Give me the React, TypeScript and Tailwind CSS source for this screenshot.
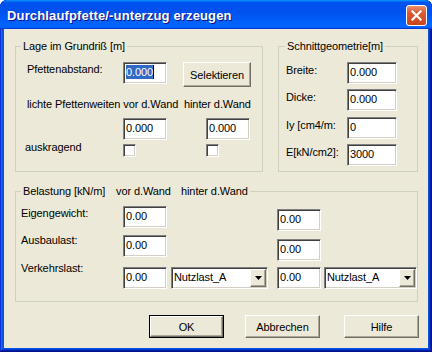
import React from "react";

const sunken =
  "bg-white border border-t-[#808080] border-l-[#808080] border-b-white border-r-white shadow-[inset_1px_1px_#404040,inset_-1px_-1px_#D4D0C8]";
const raised =
  "bg-[#ECE9D8] border border-t-white border-l-white border-b-[#716F64] border-r-[#716F64] shadow-[inset_-1px_-1px_#ACA899]";

function Edit({ className = "", children }: { className?: string; children?: React.ReactNode }) {
  return (
    <div className={`h-[22px] shrink-0 pl-[2px] pt-[2px] leading-[14px] whitespace-nowrap ${sunken} ${className}`}>
      {children}
    </div>
  );
}

function Check({ className = "" }: { className?: string }) {
  return <div className={`w-[13px] h-[13px] shrink-0 ${sunken} ${className}`} />;
}

function Combo({ className = "" }: { className?: string }) {
  return (
    <div className={`h-[22px] shrink-0 flex items-stretch p-[1px] ${sunken} ${className}`}>
      <span className="flex-1 pl-[1px] pt-[1px] leading-[14px]">Nutzlast_A</span>
      <div className={`w-[16px] flex items-center justify-center ${raised}`}>
        <svg width="7" height="4" viewBox="0 0 7 4">
          <polygon points="0,0 7,0 3.5,4" fill="black" />
        </svg>
      </div>
    </div>
  );
}

function Btn({ className = "", children }: { className?: string; children: React.ReactNode }) {
  return (
    <div className={`shrink-0 flex items-center justify-center ${raised} ${className}`}>{children}</div>
  );
}

export default function App() {
  return (
    <div className="w-[432px] h-[352px] flex flex-col bg-[#0855DD] rounded-t-[7px] overflow-hidden font-['Liberation_Sans',Arial,sans-serif] text-[11px] leading-[14px] text-black shadow-[inset_-1px_-1px_#00138c,inset_1px_1px_#0831d9,inset_-2px_-2px_#001ea0,inset_2px_2px_#166aee,inset_-3px_-3px_#003bda,inset_3px_3px_#0855dd]">
      {/* Title bar */}
      <div className="h-[29px] shrink-0 flex items-start pl-[7px] pr-[5px] rounded-t-[7px] bg-[linear-gradient(180deg,#0997ff,#0053ee_8%,#0050ee_40%,#0066ff_88%,#0066ff_93%,#005bff_95%,#003dd7_96%,#003dd7)]">
        <span className="mt-[8px] flex-1 text-white font-bold text-[13px] leading-[16px] tracking-[0.15px] [text-shadow:1px_1px_#0f1089]">
          Durchlaufpfette/-unterzug erzeugen
        </span>
        <div className="mt-[5px] w-[21px] h-[21px] rounded-[3px] border border-white bg-[linear-gradient(180deg,#E9906F,#DC5A33_35%,#C94420)] flex items-center justify-center">
          <svg width="11" height="11" viewBox="0 0 11 11">
            <path d="M1.5 1.5 L9.5 9.5 M9.5 1.5 L1.5 9.5" stroke="white" strokeWidth="2.2" strokeLinecap="square" />
          </svg>
        </div>
      </div>

      {/* Body */}
      <div className="flex-1 mx-[4px] mb-[4px] bg-[#ECE9D8] flex flex-col pl-[11px] tracking-[-0.1px]">
        <div className="flex gap-[15px] mt-[10px]">
          {/* Group 1 */}
          <fieldset className="w-[248px] h-[133px] border border-[#D0D0BF] p-0 m-0 min-w-0">
            <legend className="ml-[5px] px-[2px] leading-[14px]">Lage im Grundriß [m]</legend>
            <div className="flex items-start mt-[9px] pl-[11px]">
              <span className="w-[96px] shrink-0">Pfettenabstand:</span>
              <Edit className="w-[44px] flex items-start">
                <span className="bg-[#316AC5] text-white">0.000</span>
                <span className="w-[1px] h-[14px] bg-black" />
              </Edit>
              <Btn className="ml-[16px] w-[68px] h-[25px]">Selektieren</Btn>
            </div>
            <div className="flex items-start mt-[10px] pl-[11px] whitespace-nowrap">
              <span className="w-[157px] shrink-0">lichte Pfettenweiten vor d.Wand</span>
              <span>hinter d.Wand</span>
            </div>
            <div className="flex items-start mt-[7px] pl-[107px]">
              <Edit className="w-[44px]">0.000</Edit>
              <Edit className="w-[44px] ml-[39px]">0.000</Edit>
            </div>
            <div className="flex items-start mt-[1px] pl-[9px]">
              <span className="w-[98px] shrink-0 leading-[13px]">auskragend</span>
              <Check className="mt-[3px]" />
              <Check className="mt-[3px] ml-[70px]" />
            </div>
          </fieldset>

          {/* Group 2 */}
          <fieldset className="w-[140px] h-[133px] border border-[#D0D0BF] p-0 m-0 min-w-0">
            <legend className="ml-[6px] px-[2px] leading-[14px]">Schnittgeometrie[m]</legend>
            <div className="flex items-start mt-[9px] pl-[7px]">
              <span className="w-[61px] shrink-0 mt-[1px]">Breite:</span>
              <Edit className="w-[50px]">0.000</Edit>
            </div>
            <div className="flex items-start mt-[5px] pl-[7px]">
              <span className="w-[61px] shrink-0 mt-[1px]">Dicke:</span>
              <Edit className="w-[50px]">0.000</Edit>
            </div>
            <div className="flex items-start mt-[6px] pl-[7px]">
              <span className="w-[61px] shrink-0 mt-[1px] whitespace-nowrap">Iy [cm4/m:</span>
              <Edit className="w-[50px]">0</Edit>
            </div>
            <div className="flex items-start mt-[5px] pl-[7px]">
              <span className="w-[61px] shrink-0 mt-[1px] whitespace-nowrap">E[kN/cm2]:</span>
              <Edit className="w-[50px]">3000</Edit>
            </div>
          </fieldset>
        </div>

        {/* Group 3 */}
        <fieldset className="w-[403px] h-[118px] mt-[12px] border border-[#D0D0BF] p-0 m-0 min-w-0">
          <legend className="ml-[5px] px-[2px] leading-[14px] whitespace-nowrap">
            <span className="inline-block w-[93px]">Belastung [kN/m]</span>
            <span className="inline-block w-[65px]">vor d.Wand</span>
            <span className="inline-block">hinter d.Wand</span>
          </legend>
          <div className="flex items-start mt-[8px] pl-[5px]">
            <span className="w-[102px] shrink-0">Eigengewicht:</span>
            <Edit className="w-[44px]">0.00</Edit>
            <Edit className="w-[44px] ml-[110px] mt-[3px]">0.00</Edit>
          </div>
          <div className="flex items-start mt-[2px] pl-[5px]">
            <span className="w-[102px] shrink-0">Ausbaulast:</span>
            <Edit className="w-[44px] mt-[2px]">0.00</Edit>
            <Edit className="w-[44px] ml-[110px] mt-[6px]">0.00</Edit>
          </div>
          <div className="flex items-start pl-[5px]">
            <span className="w-[102px] shrink-0">Verkehrslast:</span>
            <Edit className="w-[44px] mt-[6px]">0.00</Edit>
            <Combo className="w-[97px] ml-[4px] mt-[6px]" />
            <Edit className="w-[44px] ml-[9px] mt-[6px]">0.00</Edit>
            <Combo className="w-[93px] ml-[3px] mt-[6px]" />
          </div>
        </fieldset>

        {/* Buttons */}
        <div className="flex items-start mt-[13px]">
          <div className="ml-[134px] w-[75px] h-[23px] border border-black flex">
            <Btn className="flex-1">OK</Btn>
          </div>
          <Btn className="ml-[21px] w-[75px] h-[23px]">Abbrechen</Btn>
          <Btn className="ml-[24px] w-[75px] h-[23px]">Hilfe</Btn>
        </div>
      </div>
    </div>
  );
}
